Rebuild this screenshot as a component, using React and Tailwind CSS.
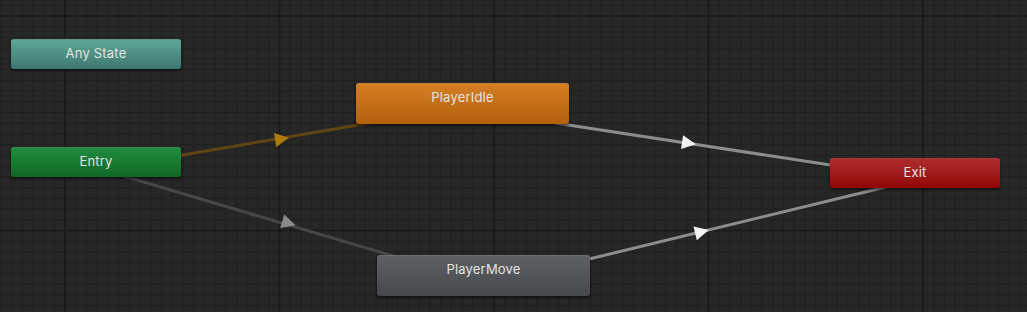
import React from "react"

const W = 1027
const H = 312
const MAJOR = 214.5
const MINOR = MAJOR / 20

const gridLines = () => {
  const minor = []
  const major = []
  for (let i = -40; i < 120; i++) {
    const x = 65 + i * MINOR
    if (x < 0 || x > W) continue
    ;(i % 20 === 0 ? major : minor).push(<line key={"x" + i} x1={x} y1={0} x2={x} y2={H} />)
  }
  for (let i = -20; i < 60; i++) {
    const y = 16 + i * MINOR
    if (y < 0 || y > H) continue
    ;(i % 20 === 0 ? major : minor).push(<line key={"y" + i} x1={0} y1={y} x2={W} y2={y} />)
  }
  return { minor, major }
}

// transitions: start, end, arrow centre, colours
const edges = [
  { a: [180, 155.5], b: [370, 123], m: [281, 139], line: "#5e4512", head: "#b07b0d" },
  { a: [120, 175], b: [400, 258], m: [288, 223], line: "#464646", head: "#8a8a8a" },
  { a: [555, 123], b: [850, 168], m: [688, 143], line: "#8c8c8c", head: "#f2f2f2" },
  { a: [585, 260], b: [890, 186], m: [701, 232], line: "#8c8c8c", head: "#f2f2f2" },
]

const Node = ({ label, className }) => (
  <div
    className={
      "absolute rounded-[3px] border-t border-white/20 shadow-[0_2px_3px_rgba(0,0,0,0.55)] text-center text-[13px] leading-[16px] pt-[5px] tracking-[0.2px] text-[#e2e2e2] " +
      className
    }
    style={{ fontFamily: "Inter, 'Liberation Sans', sans-serif" }}
  >
    {label}
  </div>
)

export default function App() {
  const { minor, major } = gridLines()
  return (
    <div className="relative w-[1027px] h-[312px] overflow-hidden bg-[#272727]">
      <svg className="absolute inset-0" width={W} height={H}>
        <g stroke="#212121" strokeWidth="1">{minor}</g>
        <g stroke="#1a1a1a" strokeWidth="1.5">{major}</g>
        {edges.map((e, i) => {
          const ang = (Math.atan2(e.b[1] - e.a[1], e.b[0] - e.a[0]) * 180) / Math.PI
          return (
            <g key={i}>
              <line x1={e.a[0]} y1={e.a[1]} x2={e.b[0]} y2={e.b[1]} stroke={e.line} strokeWidth="3" />
              <polygon
                points="-6,-7 8,0 -6,7"
                fill={e.head}
                transform={`translate(${e.m[0]} ${e.m[1]}) rotate(${ang})`}
              />
            </g>
          )
        })}
      </svg>

      <Node label="Any State" className="left-[11px] top-[39px] w-[170px] h-[30px] bg-gradient-to-b from-[#5fa696] to-[#3c7870]" />
      <Node label="Entry" className="left-[11px] top-[147px] w-[170px] h-[30px] bg-gradient-to-b from-[#1f8c3d] to-[#106824]" />
      <Node label="PlayerIdle" className="left-[356px] top-[83px] w-[213px] h-[41px] bg-gradient-to-b from-[#d57e23] to-[#b3600b]" />
      <Node label="PlayerMove" className="left-[377px] top-[255px] w-[213px] h-[41px] bg-gradient-to-b from-[#5e6063] to-[#46484b]" />
      <Node label="Exit" className="left-[830px] top-[158px] w-[170px] h-[30px] bg-gradient-to-b from-[#ad2b2b] to-[#930303]" />
    </div>
  )
}
